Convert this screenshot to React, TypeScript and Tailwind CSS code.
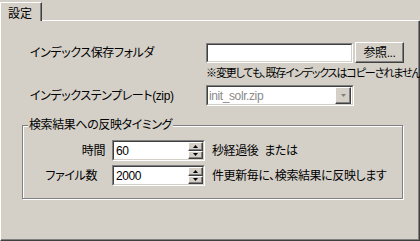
import React from "react";

const FONT = "font-['Liberation_Sans','Noto_Sans_CJK_JP',sans-serif] [font-feature-settings:'palt']";

function Sunken({ className = "", bg = "bg-white", children }: { className?: string; bg?: string; children?: React.ReactNode }) {
  return (
    <div className={`border border-t-[#808080] border-l-[#808080] border-b-white border-r-white ${className}`}>
      <div className={`h-full flex items-center border border-t-[#404040] border-l-[#404040] border-b-[#d4d0c8] border-r-[#d4d0c8] ${bg}`}>
        {children}
      </div>
    </div>
  );
}

function Raised({ className = "", children }: { className?: string; children?: React.ReactNode }) {
  return (
    <div className={`border border-t-white border-l-white border-b-[#404040] border-r-[#404040] bg-[#d4d0c8] shadow-[inset_-1px_-1px_0_#808080] flex items-center justify-center ${className}`}>
      {children}
    </div>
  );
}

function Tri({ up, color = "#000" }: { up?: boolean; color?: string }) {
  return (
    <svg width="5" height="3" viewBox="0 0 5 3">
      {up ? <polygon points="2.5,0 5,3 0,3" fill={color} /> : <polygon points="0,0 5,0 2.5,3" fill={color} />}
    </svg>
  );
}

function Spin({ value }: { value: string }) {
  return (
    <Sunken className="w-[93px] h-[21px]">
      <div className="flex-1 pl-[2px] text-[12px] leading-[14px]">{value}</div>
      <div className="flex flex-col h-full w-[15px]">
        <Raised className="h-1/2 w-full"><Tri up /></Raised>
        <Raised className="h-1/2 w-full"><Tri /></Raised>
      </div>
    </Sunken>
  );
}

export default function App() {
  return (
    <div className={`w-[420px] h-[241px] bg-[#d4d0c8] text-black flex flex-col ${FONT}`}>
      <div className="flex h-[21px] shrink-0">
        <div className="mt-[2px] w-[42px] h-[19px] border-l border-t border-l-white border-t-white border-r border-r-[#404040] shadow-[inset_-1px_0_0_#808080] text-[12px] leading-[14px] pl-[7px] pt-[4px]">
          設定
        </div>
        <div className="flex-1 border-b border-b-white mr-[1px]" />
      </div>
      <div className="flex-1 border-l border-l-white border-r border-r-[#404040] border-b border-b-[#404040] shadow-[inset_-1px_-1px_0_#808080] pl-[21px] pt-[21px]">
        <div className="pl-[8px] text-[12px] tracking-[-0.4px]">
          <div className="flex items-center h-[21px]">
            <div className="w-[176px] leading-[14px]">インデックス保存フォルダ</div>
            <Sunken className="w-[147px] h-[20px]" />
            <Raised className="ml-[2px] w-[49px] h-[21px] leading-[14px]">参照...</Raised>
          </div>
          <div className="ml-[176px] mt-[3px] leading-[14px] text-[11px] tracking-[-1.1px] whitespace-nowrap">※変更しても、既存インデックスはコピーされません</div>
          <div className="flex items-center h-[21px] mt-[5px]">
            <div className="w-[176px] leading-[14px]">インデックステンプレート(zip)</div>
            <Sunken className="w-[148px] h-[21px]">
              <div className="flex-1 pl-[1px] text-[#8a8a8a] leading-[14px]">init_solr.zip</div>
              <Raised className="w-[16px] h-full mr-[1px]"><Tri color="#808080" /></Raised>
            </Sunken>
          </div>
        </div>
        <div className="relative mt-[19px] w-[381px] h-[74px] border border-[#808080] shadow-[inset_1px_1px_0_#fff,1px_1px_0_#fff] text-[12px] tracking-[-0.4px]">
          <div className="absolute -top-[8px] left-[5px] px-[1px] bg-[#d4d0c8] leading-[14px]">検索結果への反映タイミング</div>
          <div className="pt-[14px] flex flex-col gap-[4px]">
            <div className="flex items-center">
              <div className="w-[89px] text-right pr-[7px] leading-[14px]">時間</div>
              <Spin value="60" />
              <div className="ml-[7px] leading-[14px]">秒経過後&nbsp;&nbsp;または</div>
            </div>
            <div className="flex items-center">
              <div className="w-[89px] text-right pr-[15px] leading-[14px]">ファイル数</div>
              <Spin value="2000" />
              <div className="ml-[7px] leading-[14px]">件更新毎に、検索結果に反映します</div>
            </div>
          </div>
        </div>
      </div>
    </div>
  );
}
